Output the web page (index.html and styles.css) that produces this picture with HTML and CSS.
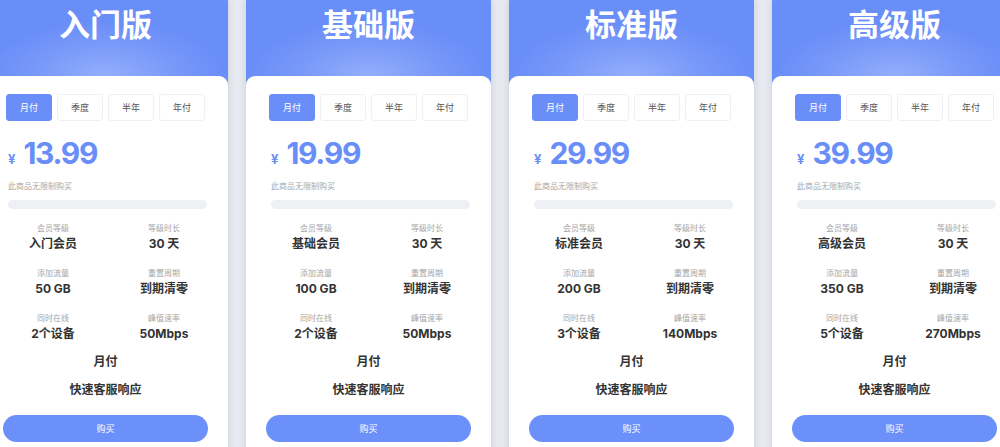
FILE: index.html
```html
<!DOCTYPE html>
<html lang="zh-CN">
<head>
<meta charset="utf-8">
<title>套餐</title>
<link rel="stylesheet" href="styles.css">
</head>
<body>
<div class="plans">
  <div class="card">
    <div class="head"><h2 class="title">入门版</h2></div>
    <div class="body">
      <div class="tabs"><span class="tab active">月付</span><span class="tab">季度</span><span class="tab">半年</span><span class="tab">年付</span></div>
      <div class="price"><span class="cur">¥</span><span class="amount">13.99</span></div>
      <div class="note">此商品无限制购买</div>
      <div class="bar"></div>
      <div class="specs">
        <div class="spec"><div class="label">会员等级</div><div class="value">入门会员</div></div>
        <div class="spec"><div class="label">等级时长</div><div class="value">30 天</div></div>
        <div class="spec"><div class="label">添加流量</div><div class="value">50 GB</div></div>
        <div class="spec"><div class="label">重置周期</div><div class="value">到期清零</div></div>
        <div class="spec"><div class="label">同时在线</div><div class="value">2个设备</div></div>
        <div class="spec"><div class="label">峰值速率</div><div class="value">50Mbps</div></div>
      </div>
      <div class="line">月付</div>
      <div class="line">快速客服响应</div>
      <button class="buy">购买</button>
    </div>
  </div>
  <div class="card">
    <div class="head"><h2 class="title">基础版</h2></div>
    <div class="body">
      <div class="tabs"><span class="tab active">月付</span><span class="tab">季度</span><span class="tab">半年</span><span class="tab">年付</span></div>
      <div class="price"><span class="cur">¥</span><span class="amount">19.99</span></div>
      <div class="note">此商品无限制购买</div>
      <div class="bar"></div>
      <div class="specs">
        <div class="spec"><div class="label">会员等级</div><div class="value">基础会员</div></div>
        <div class="spec"><div class="label">等级时长</div><div class="value">30 天</div></div>
        <div class="spec"><div class="label">添加流量</div><div class="value">100 GB</div></div>
        <div class="spec"><div class="label">重置周期</div><div class="value">到期清零</div></div>
        <div class="spec"><div class="label">同时在线</div><div class="value">2个设备</div></div>
        <div class="spec"><div class="label">峰值速率</div><div class="value">50Mbps</div></div>
      </div>
      <div class="line">月付</div>
      <div class="line">快速客服响应</div>
      <button class="buy">购买</button>
    </div>
  </div>
  <div class="card">
    <div class="head"><h2 class="title">标准版</h2></div>
    <div class="body">
      <div class="tabs"><span class="tab active">月付</span><span class="tab">季度</span><span class="tab">半年</span><span class="tab">年付</span></div>
      <div class="price"><span class="cur">¥</span><span class="amount">29.99</span></div>
      <div class="note">此商品无限制购买</div>
      <div class="bar"></div>
      <div class="specs">
        <div class="spec"><div class="label">会员等级</div><div class="value">标准会员</div></div>
        <div class="spec"><div class="label">等级时长</div><div class="value">30 天</div></div>
        <div class="spec"><div class="label">添加流量</div><div class="value">200 GB</div></div>
        <div class="spec"><div class="label">重置周期</div><div class="value">到期清零</div></div>
        <div class="spec"><div class="label">同时在线</div><div class="value">3个设备</div></div>
        <div class="spec"><div class="label">峰值速率</div><div class="value">140Mbps</div></div>
      </div>
      <div class="line">月付</div>
      <div class="line">快速客服响应</div>
      <button class="buy">购买</button>
    </div>
  </div>
  <div class="card">
    <div class="head"><h2 class="title">高级版</h2></div>
    <div class="body">
      <div class="tabs"><span class="tab active">月付</span><span class="tab">季度</span><span class="tab">半年</span><span class="tab">年付</span></div>
      <div class="price"><span class="cur">¥</span><span class="amount">39.99</span></div>
      <div class="note">此商品无限制购买</div>
      <div class="bar"></div>
      <div class="specs">
        <div class="spec"><div class="label">会员等级</div><div class="value">高级会员</div></div>
        <div class="spec"><div class="label">等级时长</div><div class="value">30 天</div></div>
        <div class="spec"><div class="label">添加流量</div><div class="value">350 GB</div></div>
        <div class="spec"><div class="label">重置周期</div><div class="value">到期清零</div></div>
        <div class="spec"><div class="label">同时在线</div><div class="value">5个设备</div></div>
        <div class="spec"><div class="label">峰值速率</div><div class="value">270Mbps</div></div>
      </div>
      <div class="line">月付</div>
      <div class="line">快速客服响应</div>
      <button class="buy">购买</button>
    </div>
  </div>
</div>
</body>
</html>
```

FILE: styles.css
```css
html, body {
  margin: 0;
  padding: 0;
  height: 100%;
  overflow: hidden;
  background: #e6e9ef;
  font-family: Inter, "Noto Sans CJK SC", sans-serif;
}

.plans {
  display: flex;
  justify-content: center;
  gap: 18px;
  width: 1000px;
}

.card {
  flex: 0 0 245px;
  width: 245px;
  height: 500px;
  display: flex;
  flex-direction: column;
  background: #6a8ef8;
  box-shadow: 0 0 6px rgba(70, 80, 110, 0.18);
}

.head {
  height: 76px;
  display: flex;
  justify-content: center;
  background: radial-gradient(ellipse 60% 90% at 50% 100%, #93aefb 0%, #7a9af9 45%, #6a8ef8 80%);
}

.title {
  margin: 4px 0 0;
  color: #fff;
  font-family: "Noto Sans CJK SC", sans-serif;
  font-weight: 700;
  font-size: 31px;
  line-height: 38px;
}

.body {
  flex: 1;
  background: #fff;
  border-radius: 9px 9px 0 0;
  padding: 18px 23px 0;
  display: flex;
  flex-direction: column;
}

.tabs {
  display: flex;
  gap: 5px;
}

.tab {
  flex: 0 0 46px;
  height: 27px;
  box-sizing: border-box;
  border: 1px solid #eef0f4;
  border-radius: 3px;
  display: flex;
  align-items: center;
  justify-content: center;
  font-family: "Noto Sans CJK SC", sans-serif;
  font-size: 9px;
  color: #555;
  background: #fff;
}

.tab.active {
  background: #6a8ef8;
  border-color: #6a8ef8;
  color: #fff;
}

.price {
  margin-top: 14px;
  display: flex;
  align-items: baseline;
  color: #6a8ef8;
  height: 36px;
}

.cur {
  font-size: 13px;
  font-weight: 700;
  margin: 0 8px 0 2px;
}

.amount {
  font-size: 30px;
  font-weight: 700;
  letter-spacing: -1.3px;
  line-height: 36px;
}

.note {
  margin: 9px 0 0 2px;
  font-size: 8px;
  line-height: 12px;
  color: #a8a8a8;
  font-family: "Noto Sans CJK SC", sans-serif;
}

.bar {
  margin: 8px -2px 0 2px;
  height: 9px;
  border-radius: 5px;
  background: #eef0f4;
}

.specs {
  margin-top: 13px;
  display: grid;
  grid-template-columns: 94px 94px;
  column-gap: 17px;
  row-gap: 13px;
}

.spec {
  text-align: center;
}

.label {
  font-family: "Noto Sans CJK SC", sans-serif;
  font-size: 8px;
  line-height: 12px;
  color: #a6a6a6;
}

.value {
  font-size: 12px;
  line-height: 20px;
  font-weight: 700;
  color: #333;
}

.line {
  text-align: center;
  font-size: 12px;
  font-weight: 700;
  color: #333;
  line-height: 20px;
  margin-top: 8px;
}

.buy {
  margin: 15px -3px 0;
  height: 27px;
  border: none;
  border-radius: 14px;
  background: #6c90fa;
  color: #fff;
  font-family: "Noto Sans CJK SC", sans-serif;
  font-size: 9px;
}
```
